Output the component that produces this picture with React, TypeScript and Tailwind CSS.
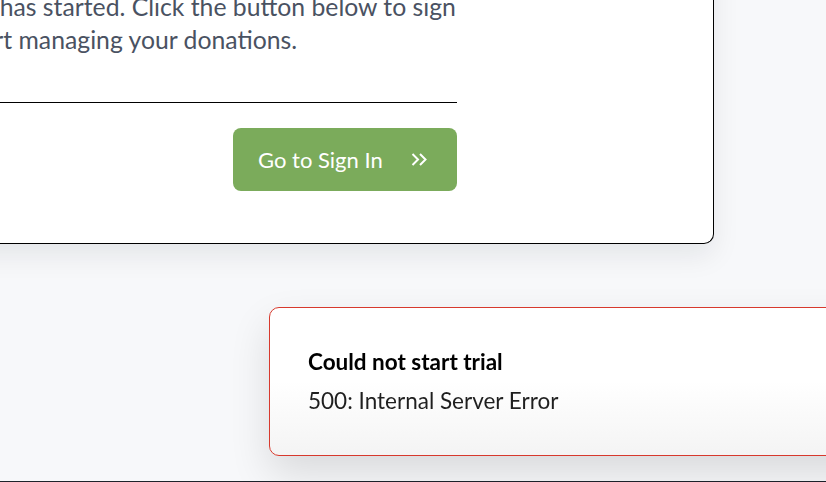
export default function App() {
  return (
    <div
      className="relative flex h-[482px] w-full flex-col overflow-hidden bg-[#f7f8fa]"
      style={{ fontFamily: "Lato, 'Noto Sans', sans-serif" }}
    >
      {/* trial card (scrolled so its top-left is out of view) */}
      <div className="-ml-[158px] -mt-[60px] w-[872px] shrink-0 rounded-br-[10px] border-b border-r border-black bg-white pb-[52px] pl-12 pr-[256px] pt-[50px] shadow-[0_12px_28px_rgba(15,23,42,0.08)]">
        <div className="flex w-[567px] flex-col">
          <p className="indent-[6px] text-[24.75px] leading-[33px] text-[#4a5262]">
            Your trial has started. Click the button below to sign in and start managing your donations.
          </p>
          <div className="mt-[46px] border-t border-black" />
          <button className="mt-[25px] flex h-[63px] w-[224px] items-center self-end rounded-lg bg-[#7bab5b] pl-[25px] text-[22px] text-white">
            <span>Go to Sign In</span>
            <svg width="17" height="13" viewBox="0 0 17 13" className="ml-[28px]" fill="none" stroke="currentColor" strokeWidth="2">
              <path d="M1.5 1l5.5 5.5-5.5 5.5" />
              <path d="M9 1l5.5 5.5-5.5 5.5" />
            </svg>
          </button>
        </div>
      </div>

      <div className="flex-1" />
      <div className="h-px w-full bg-[#1e222b]" />

      {/* error toast */}
      <div className="fixed left-[269px] top-[307px] h-[149px] w-[640px] rounded-[10px] border border-[#d7392d] bg-gradient-to-b from-white via-white to-[#f4f4f4] pl-[38px] pt-[40px] shadow-[0_18px_40px_rgba(0,0,0,0.12)]">
        <div className="text-[22.5px] font-bold leading-7 text-black">Could not start trial</div>
        <div className="mt-[11px] text-[22.5px] leading-7 text-[#1f1f1f]">500: Internal Server Error</div>
      </div>
    </div>
  );
}
